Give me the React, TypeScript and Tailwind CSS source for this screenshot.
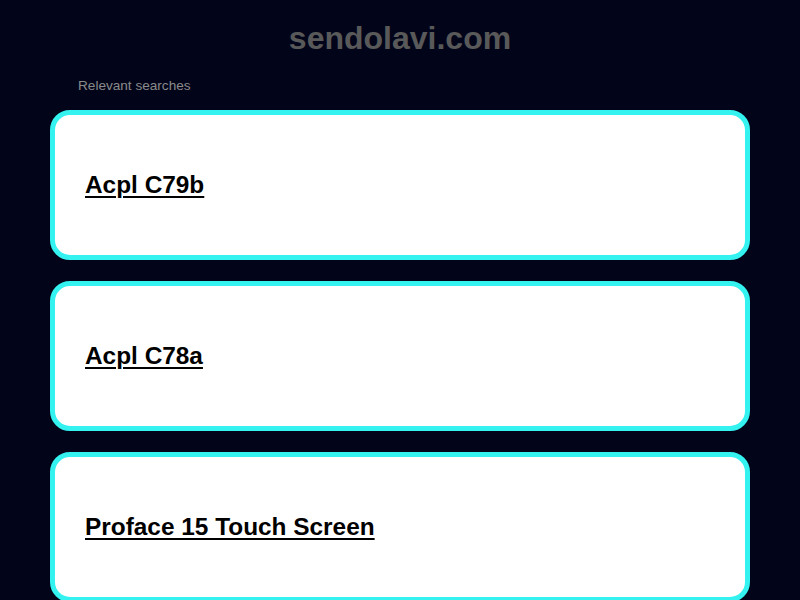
export default function App() {
  const items = ["Acpl C79b", "Acpl C78a", "Proface 15 Touch Screen"];

  return (
    <main
      className="min-h-screen bg-[#02051a] pt-[20px]"
      style={{ fontFamily: '"Liberation Sans", Arial, sans-serif' }}
    >
      <h1 className="text-center text-[32px] font-bold leading-[37px] text-[#595959]">
        sendolavi.com
      </h1>
      <p className="mt-[21px] pl-[78px] text-[13.6px] leading-[16px] text-[#8a8a8a]">
        Relevant searches
      </p>

      <div className="mx-[50px] mt-[16px] flex flex-col gap-[21px] pb-8">
        {items.map((item) => (
          <div
            key={item}
            className="flex h-[150px] items-center rounded-[20px] border-[5px] border-[#33f2ef] bg-white px-[30px]"
          >
            <a
              href="#"
              className="text-[24.4px] font-bold text-black underline decoration-2 underline-offset-[3px]"
            >
              {item}
            </a>
          </div>
        ))}
      </div>
    </main>
  );
}
